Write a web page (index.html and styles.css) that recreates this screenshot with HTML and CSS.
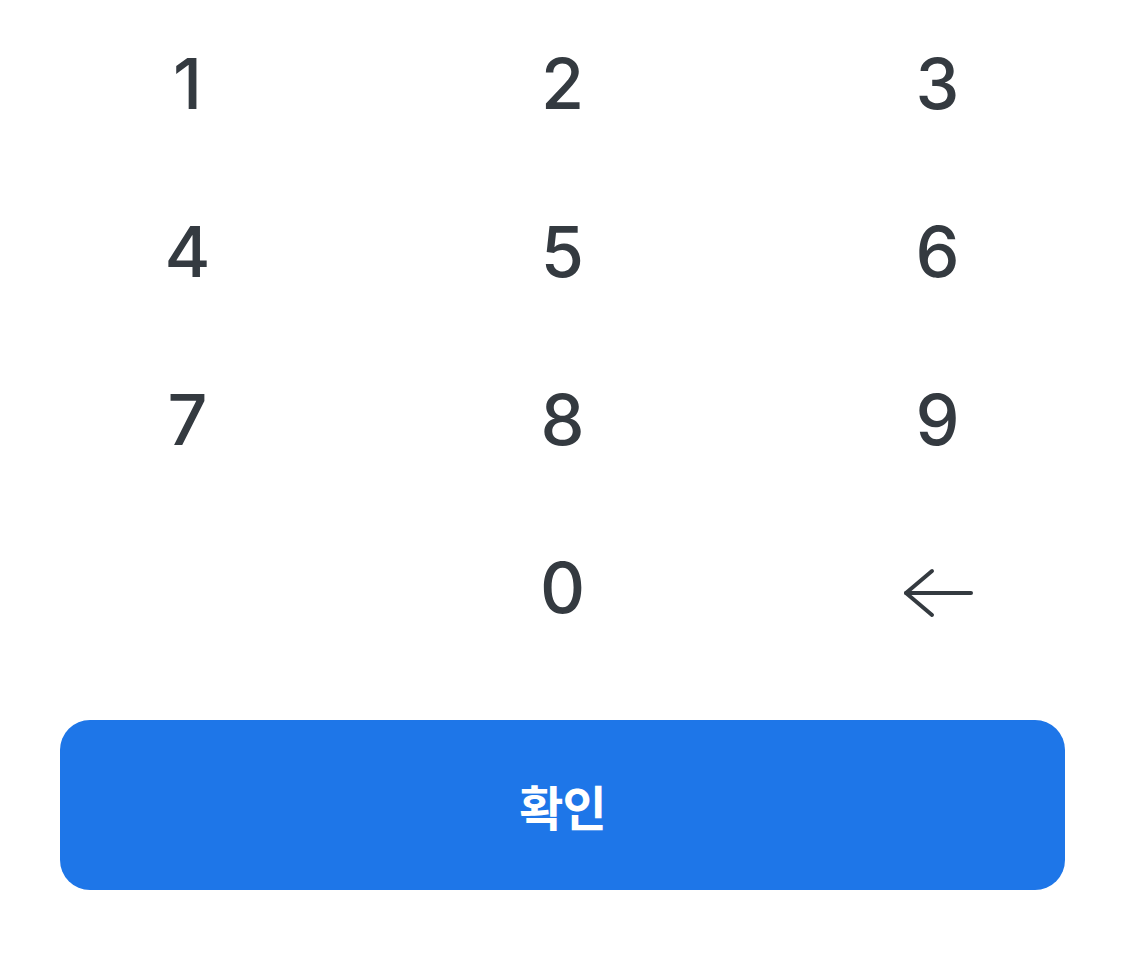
FILE: index.html
```html
<!DOCTYPE html>
<html lang="ko">
<head>
<meta charset="utf-8">
<link rel="stylesheet" href="styles.css">
</head>
<body>
<div class="pad">
  <div class="keys">
    <button class="key">1</button>
    <button class="key">2</button>
    <button class="key">3</button>
    <button class="key">4</button>
    <button class="key">5</button>
    <button class="key">6</button>
    <button class="key">7</button>
    <button class="key">8</button>
    <button class="key">9</button>
    <span class="key empty"></span>
    <button class="key">0</button>
    <button class="key back" aria-label="지우기">
      <svg width="72" height="50" viewBox="0 0 72 50" fill="none" stroke="#343a40" stroke-width="4" stroke-linecap="round" stroke-linejoin="round">
        <path d="M29 3 L3 25 L29 47"/>
        <path d="M3 25 H68"/>
      </svg>
    </button>
  </div>
  <div class="actions">
    <button class="confirm">확인</button>
  </div>
</div>
</body>
</html>
```
FILE: styles.css
```css
html, body {
  margin: 0;
  padding: 0;
  background: #ffffff;
}
body {
  width: 1125px;
  height: 963px;
  font-family: Inter, "Noto Sans", "Noto Sans CJK KR", sans-serif;
}
.pad {
  display: flex;
  flex-direction: column;
}
.keys {
  display: grid;
  grid-template-columns: repeat(3, 1fr);
  grid-auto-rows: 168px;
  padding-top: 0;
}
.key {
  display: flex;
  align-items: center;
  justify-content: center;
  border: 0;
  background: transparent;
  padding: 0;
  margin: 0;
  color: #343a40;
  font-family: Inter, "Noto Sans", sans-serif;
  font-size: 70px;
  font-weight: 500;
  line-height: 1;
}
.back svg {
  display: block;
  margin: 10px 0 0 2px;
}
.actions {
  padding: 48px 60px 0;
}
.confirm {
  width: 100%;
  height: 170px;
  border: 0;
  border-radius: 30px;
  background: #1e76e8;
  color: #ffffff;
  font-family: "Noto Sans CJK KR", sans-serif;
  font-size: 48px;
  font-weight: 700;
  letter-spacing: -1px;
}
```
